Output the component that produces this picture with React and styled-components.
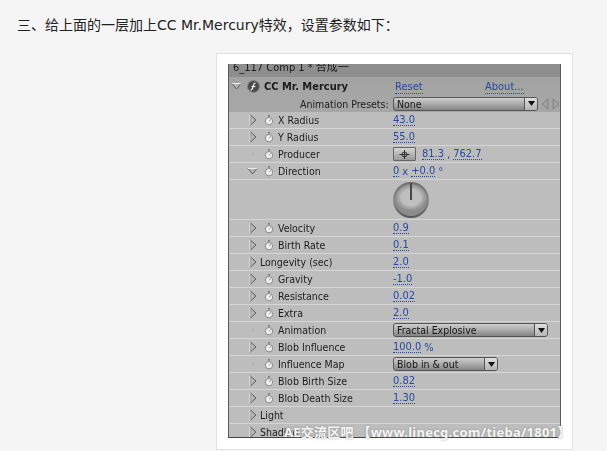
import React from 'react';
import styled, { createGlobalStyle } from 'styled-components';

const GlobalStyle = createGlobalStyle`
  html, body {
    margin: 0;
    padding: 0;
    height: 451px;
    overflow: hidden;
    background: #f5f5f5;
  }
`;

const Page = styled.div`
  width: 607px;
  height: 451px;
  overflow: hidden;
  background: #f5f5f5;
  font-family: "Liberation Sans", "Noto Sans CJK SC", sans-serif;
`;

const Heading = styled.p`
  margin: 0;
  padding: 14px 0 0 17px;
  height: 53px;
  box-sizing: border-box;
  font-size: 14px;
  line-height: 20px;
  color: #222;
  font-family: "Noto Sans CJK SC", sans-serif;

  span {
    font-family: "DejaVu Sans", sans-serif;
    font-size: 14px;
  }
`;

const Figure = styled.div`
  position: relative;
  margin-left: 216px;
  width: 357px;
  height: 397px;
  box-sizing: border-box;
  padding: 10px 11px 0 11px;
  background: #fff;
  border: 1px solid #e2e2e2;
`;

const Panel = styled.div`
  width: 333px;
  height: 374px;
  box-sizing: border-box;
  overflow: hidden;
  background: #bdbdbd;
  border-left: 1px solid #5a5a5a;
  border-right: 1px solid #5a5a5a;
  border-bottom: 1px solid #444;
  font-family: "DejaVu Sans Condensed", "DejaVu Sans", sans-serif;
  font-size: 10.5px;
  color: #1c1c1c;
  filter: blur(0.3px);
`;

const TabStrip = styled.div`
  height: 13px;
  overflow: hidden;
  padding-left: 4px;
  background: #8e8e8e;
  line-height: 8px;
  font-size: 11px;
  color: #1a1a1a;
  font-family: "DejaVu Sans Condensed", "Noto Sans CJK SC", sans-serif;
`;

const Row = styled.div`
  display: grid;
  grid-template-columns: 30px 19px 115px 1fr;
  align-items: center;
  height: 17px;
  box-sizing: border-box;
  border-bottom: 1px solid #d6d6d6;
  white-space: nowrap;
`;

const EffectRow = styled(Row)`
  grid-template-columns: 2px 12px 21px 131px 90px 1fr;
  height: 18px;
  border-bottom: 0;
  background: linear-gradient(#a2a2a2, #a6a6a6);
`;

const PresetRow = styled.div`
  display: flex;
  align-items: center;
  height: 17px;
  box-sizing: border-box;
  background: #a6a6a6;
  padding-left: 71px;
  white-space: nowrap;
`;

const PresetLabel = styled.span`
  width: 93px;
`;

const EffectName = styled.span`
  font-size: 11px;
  font-weight: bold;
`;

const Label = styled.span`
  grid-column: ${(p) => (p.$wide ? '2 / 4' : '3')};
  padding-left: ${(p) => (p.$wide ? '1px' : '0')};
`;

const Value = styled.span`
  color: #2749a0;
  font-size: 11px;
  display: flex;
  align-items: center;
  gap: 3px;
`;

const Num = styled.span`
  border-bottom: 1px dotted #2749a0;
  line-height: 11px;
`;

const LinkText = styled.span`
  color: #2749a0;
  font-size: 11px;
  border-bottom: 1px dotted #2749a0;
  line-height: 11px;
  justify-self: start;
`;

const Target = styled.span`
  display: flex;
  align-items: center;
  justify-content: center;
  width: 21px;
  height: 12px;
  margin-right: 3px;
  border: 1px solid #666;
  border-radius: 1px;
  background: linear-gradient(#d4d4d4, #9a9a9a);
`;

const Select = styled.div`
  display: flex;
  align-items: center;
  justify-content: space-between;
  width: ${(p) => p.$width}px;
  height: 14px;
  box-sizing: border-box;
  padding-left: 3px;
  border: 1px solid #555;
  border-radius: 3px;
  overflow: hidden;
  background: linear-gradient(#cfcfcf, #858585);
  color: #161616;
`;

const SelectArrow = styled.span`
  display: flex;
  align-items: center;
  justify-content: center;
  width: 12px;
  height: 12px;
  border-left: 1px solid #555;
  background: linear-gradient(#dedede, #b4b4b4);
`;

const NavArrows = styled.span`
  display: flex;
  gap: 3px;
  margin-left: 3px;
`;

const KnobRow = styled.div`
  display: flex;
  height: 40px;
  box-sizing: border-box;
  padding: 2px 0 0 164px;
  border-bottom: 1px solid #d6d6d6;
`;

const Knob = styled.div`
  position: relative;
  width: 36px;
  height: 36px;
  border-radius: 50%;
  background: linear-gradient(#6e6e6e, #8a8a8a 55%, #555);

  &::before {
    content: '';
    position: absolute;
    inset: 2px;
    border-radius: 50%;
    background: radial-gradient(closest-side at 50% 42%, #bfbfbf 0 60%, #a6a6a6 78%, #8c8c8c 100%);
  }

  &::after {
    content: '';
    position: absolute;
    left: 17px;
    top: 1px;
    width: 2px;
    height: 17px;
    background: #484848;
  }
`;

const Watermark = styled.div`
  position: absolute;
  left: 67px;
  top: 369px;
  white-space: nowrap;
  font-family: "Noto Sans", "Noto Sans CJK SC", sans-serif;
  font-size: 13px;
  font-weight: bold;
  letter-spacing: 0.25px;
  line-height: 18px;
  color: #f6f6f6;
  text-shadow: 0 0 2px rgba(120, 120, 120, 0.8);
`;

const Twirl = ({ open, dot }) => {
  if (dot) {
    return (
      <svg width="12" height="12" viewBox="0 0 12 12" style={{ justifySelf: 'end' }}>
        <rect x="5" y="5" width="2" height="2" fill="#aeaeae" />
      </svg>
    );
  }
  return (
    <svg width="12" height="12" viewBox="0 0 12 12" style={{ justifySelf: 'end' }}>
      <path
        d={open ? 'M1 3.5h9L5.5 9z' : 'M3.5 1v10l5.5-5z'}
        fill="#b4b4b4"
        stroke="#5e5e5e"
        strokeWidth="1"
      />
      <path d={open ? 'M1 3.5h9' : 'M3 1v10'} stroke="#ececec" fill="none" strokeWidth="1" />
    </svg>
  );
};

const Stopwatch = () => (
  <svg width="10" height="11" viewBox="0 0 10 11" style={{ justifySelf: 'center' }}>
    <rect x="4" y="0" width="2" height="1.6" fill="#7d7d7d" />
    <circle cx="5" cy="6.2" r="3.7" fill="#ededed" stroke="#8a8a8a" strokeWidth="1" />
    <path d="M5 6.2L7 4.4" stroke="#8a8a8a" strokeWidth="0.9" />
  </svg>
);

const DownArrow = () => (
  <svg width="7" height="5" viewBox="0 0 7 5">
    <path d="M0 0h7L3.5 5z" fill="#111" />
  </svg>
);

const rowsA = [
  { label: 'X Radius', value: '43.0' },
  { label: 'Y Radius', value: '55.0' },
];

const rowsB = [
  { label: 'Velocity', value: '0.9' },
  { label: 'Birth Rate', value: '0.1' },
  { label: 'Longevity (sec)', value: '2.0', wide: true },
  { label: 'Gravity', value: '-1.0' },
  { label: 'Resistance', value: '0.02' },
  { label: 'Extra', value: '2.0' },
];

function Param({ label, value, wide }) {
  return (
    <Row>
      <Twirl />
      {!wide && <Stopwatch />}
      <Label $wide={wide}>{label}</Label>
      <Value><Num>{value}</Num></Value>
    </Row>
  );
}

export default function App() {
  return (
    <Page>
      <GlobalStyle />
      <Heading>三、给上面的一层加上<span>CC Mr.Mercury</span>特效，设置参数如下：</Heading>
      <Figure>
        <Panel>
          <TabStrip>6_117 Comp 1 * 合成一</TabStrip>
          <EffectRow>
            <span />
            <Twirl open />
            <svg width="13" height="13" viewBox="0 0 13 13" style={{ justifySelf: 'end', marginRight: 4 }}>
              <circle cx="6.5" cy="6.5" r="6" fill="#4a4a4a" stroke="#888" />
              <path d="M8.5 3C6.5 3 6.5 5 6 7S5 10 3.5 10M4.5 6.5h4" stroke="#f2f2f2" strokeWidth="1.2" fill="none" />
            </svg>
            <EffectName>CC Mr. Mercury</EffectName>
            <span><LinkText>Reset</LinkText></span>
            <span><LinkText>About...</LinkText></span>
          </EffectRow>
          <PresetRow>
            <PresetLabel>Animation Presets:</PresetLabel>
            <Select $width={145}>
              None
              <SelectArrow><DownArrow /></SelectArrow>
            </Select>
            <NavArrows>
              <svg width="8" height="12" viewBox="0 0 8 12"><path d="M7 1v10L1 6z" fill="#a4a4a4" stroke="#767676" strokeWidth="0.8" /></svg>
              <svg width="8" height="12" viewBox="0 0 8 12"><path d="M1 1v10l6-5z" fill="#a4a4a4" stroke="#767676" strokeWidth="0.8" /></svg>
            </NavArrows>
          </PresetRow>
          {rowsA.map((r) => <Param key={r.label} {...r} />)}
          <Row>
            <Twirl dot />
            <Stopwatch />
            <Label>Producer</Label>
            <Value>
              <Target>
                <svg width="11" height="9" viewBox="0 0 11 9">
                  <circle cx="5.5" cy="4.5" r="2.5" fill="none" stroke="#333" />
                  <path d="M0.5 4.5h10M5.5 0v9" stroke="#333" />
                </svg>
              </Target>
              <Num>81.3</Num>,<Num>762.7</Num>
            </Value>
          </Row>
          <Row>
            <Twirl open />
            <Stopwatch />
            <Label>Direction</Label>
            <Value><Num>0</Num>x<Num>+0.0</Num>°</Value>
          </Row>
          <KnobRow><Knob /></KnobRow>
          {rowsB.map((r) => <Param key={r.label} {...r} />)}
          <Row>
            <Twirl dot />
            <Stopwatch />
            <Label>Animation</Label>
            <Select $width={155}>
              Fractal Explosive
              <SelectArrow><DownArrow /></SelectArrow>
            </Select>
          </Row>
          <Row>
            <Twirl />
            <Stopwatch />
            <Label>Blob Influence</Label>
            <Value><Num>100.0</Num>%</Value>
          </Row>
          <Row>
            <Twirl dot />
            <Stopwatch />
            <Label>Influence Map</Label>
            <Select $width={105}>
              Blob in &amp; out
              <SelectArrow><DownArrow /></SelectArrow>
            </Select>
          </Row>
          <Param label="Blob Birth Size" value="0.82" />
          <Param label="Blob Death Size" value="1.30" />
          <Row>
            <Twirl />
            <Label $wide>Light</Label>
          </Row>
          <Row>
            <Twirl />
            <Label $wide>Shading</Label>
          </Row>
        </Panel>
        <Watermark>AE交流区吧 【www.linecg.com/tieba/1801】</Watermark>
      </Figure>
    </Page>
  );
}
